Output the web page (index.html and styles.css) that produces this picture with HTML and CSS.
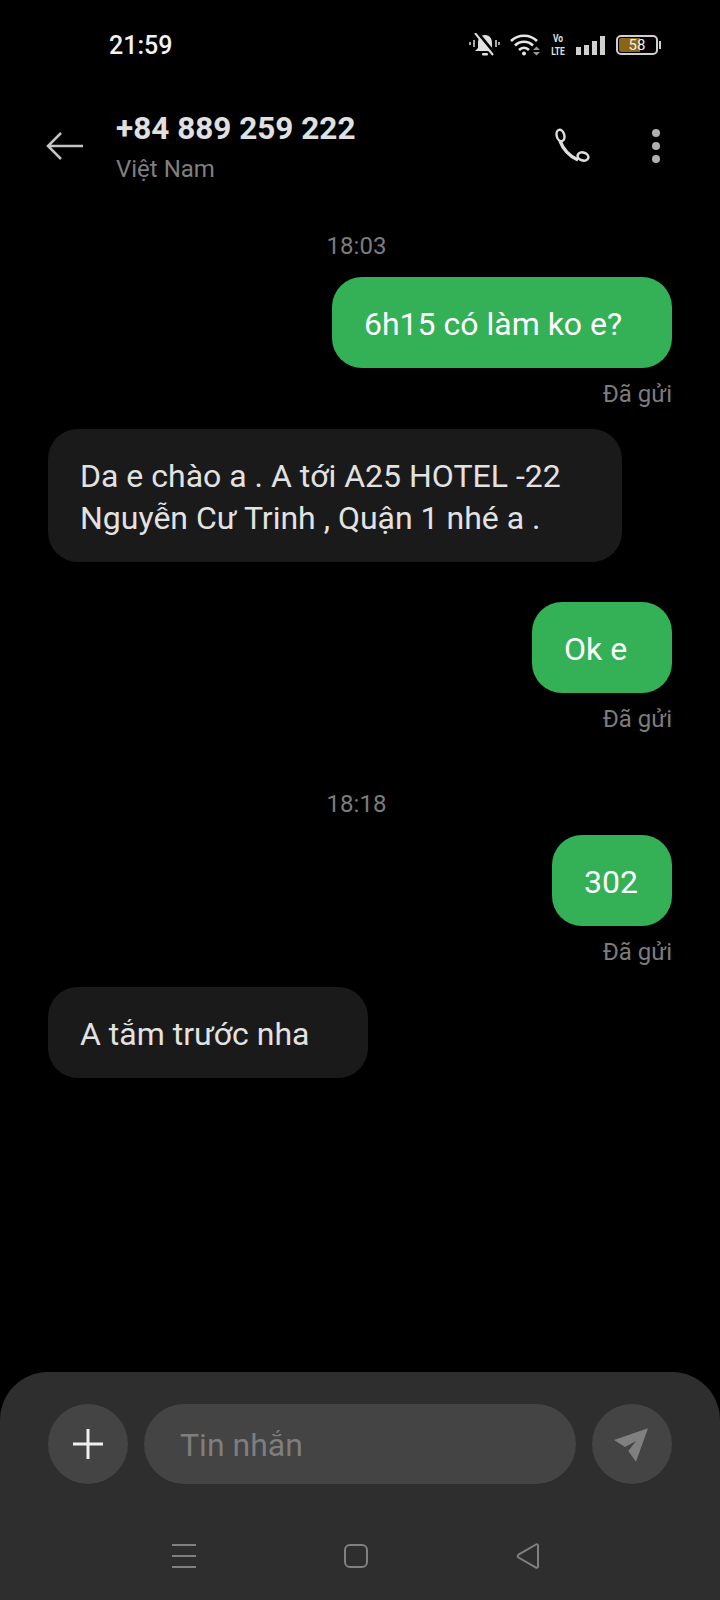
FILE: index.html
```html
<!DOCTYPE html>
<html lang="vi">
<head>
    <meta charset="UTF-8">
    <meta name="viewport" content="width=device-width, initial-scale=1.0">
    <title>+84 889 259 222</title>
    <link rel="stylesheet" href="styles.css">
</head>
<body>
<div class="screen">
    <div class="status-bar">
        <span class="clock">21:59</span>
        <div class="status-icons">
            <svg class="ic-bell" width="34" height="24" viewBox="0 0 34 24">
                <path d="M18 2c-5 0-7 4-7 8v5l-3 3h19l-2-3v-5c0-4-2-8-7-8z" fill="#e0e0e0"/>
                <rect x="15" y="20" width="6" height="2.500" rx="1.200" fill="#e0e0e0"/>
                <path d="M10 -1l19 23" stroke="#000" stroke-width="3"/>
                <path d="M8 0l18 22" stroke="#e0e0e0" stroke-width="2"/>
                <path d="M3 9v3M7 7v7M29 7v7M32 9v3" stroke="#e0e0e0" stroke-width="1.500" fill="none"/>
            </svg>
            <svg class="ic-wifi" width="32" height="24" viewBox="0 0 32 24">
                <path d="M1 8c7-7 19-7 26 0M5 12.500c5-5 13-5 18 0M9 17c3-3 7-3 10 0" stroke="#e6e6e6" stroke-width="2.600" fill="none"/>
                <circle cx="14" cy="20.500" r="2" fill="#e6e6e6"/>
                <path d="M23 17h7l-3.500-3.500zM23 19h7l-3.500 3.500z" fill="#9a9a9a"/>
            </svg>
            <div class="volte"><span>Vo</span><span>LTE</span></div>
            <div class="signal">
                <i class="bar-1"></i><i class="bar-2"></i><i class="bar-3"></i><i class="bar-4"></i>
            </div>
            <div class="battery">
                <div class="battery-body">
                    <div class="battery-fill"></div>
                    <span class="battery-num">58</span>
                </div>
                <div class="battery-cap"></div>
            </div>
        </div>
    </div>

    <div class="top-bar">
        <svg class="back" width="38" height="30" viewBox="0 0 38 30">
            <path d="M37 15H3M15 2L2 15l13 13" stroke="#c4c4c4" stroke-width="2.500" fill="none"/>
        </svg>
        <div class="contact">
            <div class="contact-name">+84 889 259 222</div>
            <div class="contact-sub">Việt Nam</div>
        </div>
        <svg class="call" width="36" height="36" viewBox="0 0 36 36">
            <ellipse cx="6.500" cy="7.500" rx="3.800" ry="5.800" transform="rotate(-15 6.500 7.500)" stroke="#dedede" stroke-width="2.500" fill="none"/>
            <ellipse cx="29" cy="28.500" rx="5.500" ry="4" transform="rotate(18 29 28.500)" stroke="#dedede" stroke-width="2.500" fill="none"/>
            <path d="M6 13c3 8 9 15 18 19" stroke="#dedede" stroke-width="3.500" fill="none"/>
        </svg>
        <div class="more"><i></i><i></i><i></i></div>
    </div>

    <div class="thread">
        <div class="time-label first">18:03</div>
        <div class="bubble out wide-1">6h15 có làm ko e?</div>
        <div class="sent">Đã gửi</div>
        <div class="bubble in wide-2">Da e chào a . A tới A25 HOTEL -22 Nguyễn Cư Trinh , Quận 1 nhé a .</div>
        <div class="bubble out wide-3 gap-top">Ok e</div>
        <div class="sent">Đã gửi</div>
        <div class="time-label">18:18</div>
        <div class="bubble out wide-4">302</div>
        <div class="sent">Đã gửi</div>
        <div class="bubble in wide-5">A tắm trước nha</div>
    </div>

    <div class="composer">
        <div class="input-row">
            <div class="round-btn">
                <svg width="32" height="32" viewBox="0 0 32 32">
                    <path d="M16 1v30M1 16h30" stroke="#f0f0f0" stroke-width="3"/>
                </svg>
            </div>
            <div class="input-box">Tin nhắn</div>
            <div class="round-btn">
                <svg width="36" height="36" viewBox="0 0 36 36">
                    <path d="M34 2.300L0 14l11 7 11-6-7.700 10L22 35.700z" fill="#808080"/>
                </svg>
            </div>
        </div>
        <div class="nav-bar">
            <div class="nav-menu"><i></i><i></i><i></i></div>
            <div class="nav-home"></div>
            <svg width="24" height="26" viewBox="0 0 24 26">
                <path d="M22 2.500v21c0 1-1 1.500-2 1L2.500 14.500c-1-.7-1-2 0-2.800L20 1.500c1-.6 2 0 2 1z" stroke="#808080" stroke-width="2" fill="none"/>
            </svg>
        </div>
    </div>
</div>
</body>
</html>
```

FILE: styles.css
```css
* {
    box-sizing: border-box;
}
html, body {
    margin: 0;
    padding: 0;
    background-color: #000;
}
body {
    font-family: Roboto, 'Noto Sans', sans-serif;
}
.screen {
    width: 720px;
    height: 1600px;
    display: flex;
    flex-direction: column;
    overflow: hidden;
    background-color: #000;
}

/* status bar */
.status-bar {
    height: 90px;
    display: flex;
    justify-content: space-between;
    align-items: center;
    padding: 0 59px 0 109px;
}
.clock {
    color: #f2f2f2;
    font-size: 25px;
    font-weight: 500;
}
.status-icons {
    display: flex;
    align-items: center;
}
.ic-bell {
    margin-right: 9px;
}
.ic-wifi {
    margin-right: 8px;
}
.volte {
    display: flex;
    flex-direction: column;
    align-items: center;
    width: 16px;
    margin-right: 10px;
    color: #e0e0e0;
    font-size: 10.500px;
    font-weight: 700;
    line-height: 13px;
    transform: scaleX(0.8);
}
.signal {
    display: flex;
    align-items: flex-end;
    gap: 3px;
    height: 20px;
    margin-right: 11px;
}
.signal i {
    display: block;
    width: 5px;
    background-color: #d0d0d0;
}
.bar-1 { height: 8px; }
.bar-2 { height: 10px; }
.bar-3 { height: 14px; }
.bar-4 { height: 19px; }
.battery {
    display: flex;
    align-items: center;
}
.battery-body {
    position: relative;
    width: 42px;
    height: 20px;
    border: 2px solid #d0d0d0;
    border-radius: 5px;
    padding: 1px;
}
.battery-fill {
    width: 58%;
    height: 100%;
    background-color: #8a6518;
    border-radius: 2px 0 0 2px;
}
.battery-num {
    position: absolute;
    top: 0;
    left: 0;
    right: 0;
    text-align: center;
    color: #eee;
    font-size: 15px;
    line-height: 16px;
}
.battery-cap {
    width: 2px;
    height: 8px;
    margin-left: 1px;
    background-color: #d0d0d0;
}

/* header */
.top-bar {
    height: 110px;
    display: flex;
    align-items: center;
    padding: 2px 60px 0 46px;
}
.back {
    margin-right: 32px;
}
.contact {
    flex: 1;
}
.contact-name {
    color: #e0e0e0;
    font-size: 31.500px;
    font-weight: 700;
    line-height: 38px;
}
.contact-sub {
    color: #7f7f7f;
    font-size: 24px;
    line-height: 28px;
    margin-top: 7px;
}
.call {
    margin-right: 62px;
}
.more {
    display: flex;
    flex-direction: column;
    gap: 5px;
}
.more i {
    display: block;
    width: 8px;
    height: 8px;
    border-radius: 50%;
    background-color: #b0b0b0;
}

/* messages */
.thread {
    flex: 1;
    display: flex;
    flex-direction: column;
    padding: 0 48px;
}
.time-label {
    align-self: center;
    color: #7c7c7c;
    font-size: 24px;
    line-height: 28px;
    margin-top: 57px;
    margin-bottom: 17px;
    margin-right: 7px;
}
.time-label.first {
    margin-top: 32px;
}
.bubble {
    border-radius: 30px;
    font-size: 32px;
    line-height: 42px;
    padding: 26px 32px 23px;
}
.out {
    align-self: flex-end;
    background-color: #34b057;
    color: #fff;
}
.in {
    align-self: flex-start;
    background-color: #1a1a1a;
    color: #e2e2e2;
}
.wide-1 { width: 340px; }
.wide-2 { width: 574px; margin-top: 21px; }
.wide-3 { width: 140px; }
.wide-4 { width: 120px; }
.wide-5 { width: 320px; margin-top: 21px; }
.gap-top {
    margin-top: 40px;
}
.sent {
    align-self: flex-end;
    color: #7c7c7c;
    font-size: 24px;
    line-height: 28px;
    margin-top: 12px;
}

/* bottom */
.composer {
    height: 228px;
    background-color: #2e2e2e;
    border-radius: 48px 48px 0 0;
    padding: 32px 48px 0;
}
.input-row {
    display: flex;
    gap: 16px;
}
.round-btn {
    width: 80px;
    height: 80px;
    flex-shrink: 0;
    border-radius: 50%;
    background-color: #444;
    display: flex;
    align-items: center;
    justify-content: center;
}
.input-box {
    flex: 1;
    height: 80px;
    border-radius: 40px;
    background-color: #444;
    color: #7e7e7e;
    font-size: 32px;
    line-height: 82px;
    padding-left: 36px;
}
.nav-bar {
    display: flex;
    align-items: center;
    gap: 148px;
    height: 24px;
    margin-top: 60px;
    padding-left: 124px;
}
.nav-menu {
    display: flex;
    flex-direction: column;
    gap: 9px;
}
.nav-menu i {
    display: block;
    width: 24px;
    height: 2px;
    background-color: #808080;
}
.nav-home {
    width: 24px;
    height: 24px;
    border: 2px solid #808080;
    border-radius: 6px;
}
```
